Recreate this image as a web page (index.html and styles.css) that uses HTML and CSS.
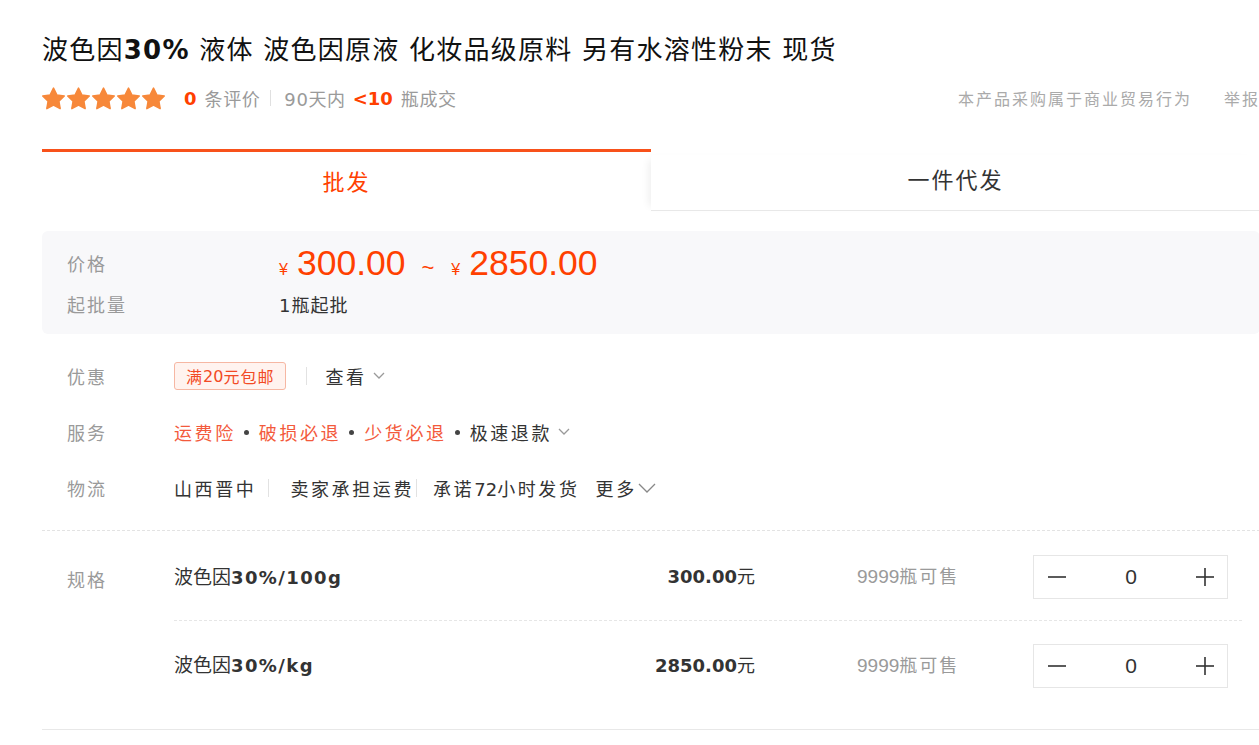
FILE: index.html
```html
<!DOCTYPE html>
<html lang="zh-CN">
<head>
<meta charset="utf-8">
<title>波色因30% 液体</title>
<link rel="stylesheet" href="styles.css">
</head>
<body>
<div class="page">
  <h1 class="title">波色因<b>30%</b> 液体 波色因原液 化妆品级原料 另有水溶性粉末 现货</h1>

  <div class="meta">
    <div class="rating">
      <div class="stars">
        <svg viewBox="0 0 24 24"><path d="M12 1.2L15.47 8.23L23.22 9.35L17.61 14.82L18.94 22.55L12 18.9L5.06 22.55L6.39 14.82L0.78 9.35L8.53 8.23Z"/></svg>
        <svg viewBox="0 0 24 24"><path d="M12 1.2L15.47 8.23L23.22 9.35L17.61 14.82L18.94 22.55L12 18.9L5.06 22.55L6.39 14.82L0.78 9.35L8.53 8.23Z"/></svg>
        <svg viewBox="0 0 24 24"><path d="M12 1.2L15.47 8.23L23.22 9.35L17.61 14.82L18.94 22.55L12 18.9L5.06 22.55L6.39 14.82L0.78 9.35L8.53 8.23Z"/></svg>
        <svg viewBox="0 0 24 24"><path d="M12 1.2L15.47 8.23L23.22 9.35L17.61 14.82L18.94 22.55L12 18.9L5.06 22.55L6.39 14.82L0.78 9.35L8.53 8.23Z"/></svg>
        <svg viewBox="0 0 24 24"><path d="M12 1.2L15.47 8.23L23.22 9.35L17.61 14.82L18.94 22.55L12 18.9L5.06 22.55L6.39 14.82L0.78 9.35L8.53 8.23Z"/></svg>
      </div>
      <span class="num">0</span><span class="cj">条评价</span>
      <span class="vsep"></span>
      <span class="cj">90天内</span><span class="num lt">&lt;10</span><span class="cj">瓶成交</span>
    </div>
    <div class="meta-right">
      <span>本产品采购属于商业贸易行为</span>
      <span>举报</span>
    </div>
  </div>

  <div class="tabs">
    <div class="tab active">批发</div>
    <div class="tab other">一件代发</div>
  </div>

  <div class="pricebox">
    <div class="prow p1">
      <span class="label">价格</span>
      <span class="price"><span class="yen">¥</span><span class="big">300.00</span><span class="tilde">~</span><span class="yen">¥</span><span class="big">2850.00</span></span>
    </div>
    <div class="prow p2">
      <span class="label">起批量</span>
      <span class="val">1瓶起批</span>
    </div>
  </div>

  <div class="info">
    <div class="irow">
      <span class="label">优惠</span>
      <span class="tag">满<span class="lat">20</span>元包邮</span>
      <span class="isep sep-a"></span>
      <span class="val">查看</span>
      <svg class="chev" viewBox="0 0 12 8"><polyline points="1,1 6,6 11,1"/></svg>
    </div>
    <div class="irow">
      <span class="label">服务</span>
      <span class="svc">运费险</span><span class="dot"></span>
      <span class="svc">破损必退</span><span class="dot"></span>
      <span class="svc">少货必退</span><span class="dot"></span>
      <span class="val">极速退款</span>
      <svg class="chev chev-b" viewBox="0 0 12 8"><polyline points="1,1 6,6 11,1"/></svg>
    </div>
    <div class="irow">
      <span class="label">物流</span>
      <span class="val">山西晋中</span>
      <span class="isep sep-b"></span>
      <span class="val">卖家承担运费</span>
      <span class="isep sep-c"></span>
      <span class="val">承诺<span class="lat">72</span>小时发货</span>
      <span class="val more">更多</span>
      <svg class="chev chev-big" viewBox="0 0 18 10"><polyline points="1,1 9,9 17,1"/></svg>
    </div>
  </div>

  <div class="specs">
    <span class="label spec-label">规格</span>
    <div class="slist">
      <div class="srow">
        <span class="sname">波色因<b>30%/100g</b></span>
        <span class="sprice"><b>300.00</b>元</span>
        <span class="stock"><span class="lat2">9999</span>瓶可售</span>
        <div class="stepper">
          <svg viewBox="0 0 18 18"><line x1="0" y1="9" x2="18" y2="9"/></svg>
          <span class="qty">0</span>
          <svg viewBox="0 0 18 18"><line x1="0" y1="9" x2="18" y2="9"/><line x1="9" y1="0" x2="9" y2="18"/></svg>
        </div>
      </div>
      <div class="srow">
        <span class="sname">波色因<b>30%/kg</b></span>
        <span class="sprice"><b>2850.00</b>元</span>
        <span class="stock"><span class="lat2">9999</span>瓶可售</span>
        <div class="stepper">
          <svg viewBox="0 0 18 18"><line x1="0" y1="9" x2="18" y2="9"/></svg>
          <span class="qty">0</span>
          <svg viewBox="0 0 18 18"><line x1="0" y1="9" x2="18" y2="9"/><line x1="9" y1="0" x2="9" y2="18"/></svg>
        </div>
      </div>
    </div>
  </div>
</div>
</body>
</html>
```

FILE: styles.css
```css
html, body {
  margin: 0;
  padding: 0;
  overflow: hidden;
  background: #fff;
}

body {
  font-family: "DejaVu Sans", "Noto Sans CJK SC", sans-serif;
  color: #333;
}

.page {
  width: 1218px;
  padding: 32px 0 0 42px;
}

/* title */
.title {
  margin: 0;
  font-size: 26px;
  line-height: 36px;
  font-weight: normal;
  color: #111;
  letter-spacing: 1.25px;
  white-space: nowrap;
}

.title b {
  font-weight: bold;
}

/* rating row */
.meta {
  display: flex;
  align-items: center;
  justify-content: space-between;
  height: 26px;
  margin-top: 17px;
}

.rating {
  display: flex;
  align-items: center;
  font-size: 18px;
  color: #9a9a9a;
  white-space: nowrap;
}

.rating .cj {
  letter-spacing: 0.6px;
}

.stars {
  display: flex;
  gap: 2px;
  margin-right: 19px;
}

.stars svg {
  width: 23px;
  height: 23px;
  display: block;
  overflow: visible;
}

.stars path {
  fill: #f7883a;
  stroke: #f7883a;
  stroke-width: 1.6;
  stroke-linejoin: round;
}

.num {
  color: #ff4000;
  font-weight: bold;
  margin-right: 8px;
}

.num.lt {
  margin-left: 7px;
}

.vsep {
  width: 1px;
  height: 16px;
  background: #e0e0e0;
  margin: 0 13px 0 10px;
}

.meta-right {
  display: flex;
  gap: 32px;
  font-size: 16px;
  letter-spacing: 2px;
  color: #aaa;
  white-space: nowrap;
}

/* tabs */
.tabs {
  display: flex;
  height: 62px;
  margin-top: 38px;
}

.tab {
  flex: 1;
  display: flex;
  align-items: center;
  justify-content: center;
  font-size: 22px;
  letter-spacing: 2px;
}

.tab.active {
  border-top: 3px solid #f8511a;
  padding-bottom: 4px;
  color: #ff4000;
}

.tab.other {
  margin-top: 6px;
  padding-bottom: 9px;
  border-bottom: 1px solid #e8e8e8;
  border-radius: 4px 0 0 0;
  box-shadow: -7px 0 8px -5px rgba(0, 0, 0, 0.07);
  color: #333;
}

/* price box */
.pricebox {
  margin-top: 20px;
  background: #f8f8fa;
  border-radius: 6px;
  padding: 10px 25px 11px;
}

.prow {
  display: flex;
  align-items: center;
}

.prow.p1 {
  height: 44px;
}

.prow.p2 {
  height: 38px;
}

.label {
  flex: none;
  width: 212px;
  color: #9a9a9a;
  font-size: 18px;
  letter-spacing: 2px;
}

.price {
  display: flex;
  align-items: baseline;
  color: #ff4000;
  font-family: "Liberation Sans", sans-serif;
}

.yen {
  font-size: 16px;
  margin-right: 9px;
}

.big {
  font-size: 35.5px;
}

.tilde {
  font-size: 22px;
  margin: 0 17px 0 16px;
}

.val {
  font-size: 18px;
  letter-spacing: 2.6px;
  color: #333;
  white-space: nowrap;
}

.prow .val {
  letter-spacing: 1px;
}

/* info rows */
.info {
  margin-top: 14px;
  padding: 0 0 14px 25px;
  border-bottom: 1px dashed #e3e3e3;
}

.irow {
  display: flex;
  align-items: center;
  height: 56px;
  font-size: 18px;
}

.irow .label {
  width: 107px;
}

.lat {
  letter-spacing: 0;
}

.tag {
  box-sizing: border-box;
  height: 28px;
  display: flex;
  align-items: center;
  padding: 0 11px;
  border: 1px solid #f6b7a3;
  background: #fff3ef;
  border-radius: 3px;
  color: #f24a24;
  font-size: 16px;
  letter-spacing: 1px;
  white-space: nowrap;
}

.isep {
  width: 1px;
  height: 18px;
  background: #e2e2e2;
}

.sep-a {
  margin: 0 18px 0 20px;
}

.sep-b {
  margin: 0 21px 0 12px;
}

.sep-c {
  margin: 0 16px 0 2px;
}

.svc {
  color: #f35a3c;
  letter-spacing: 2.6px;
  white-space: nowrap;
}

.dot {
  width: 5px;
  height: 5px;
  border-radius: 50%;
  background: #444;
  margin: 0 10px 0 8px;
}

.chev {
  width: 12px;
  height: 8px;
  margin-left: 6px;
  fill: none;
  stroke: #9a9a9a;
  stroke-width: 1.3;
}

.chev-b {
  margin-left: 6px;
}

.more {
  margin-left: 16px;
}

.chev-big {
  width: 18px;
  height: 10px;
  margin-left: 1px;
  stroke: #888;
}

/* specs */
.specs {
  display: flex;
  padding: 2px 0 20px 25px;
  border-bottom: 1px solid #e8e8e8;
}

.specs .spec-label {
  width: 107px;
  padding-top: 35px;
  line-height: 26px;
}

.slist {
  width: 1068px;
}

.srow {
  box-sizing: border-box;
  display: flex;
  align-items: center;
  height: 88px;
  padding-bottom: 3px;
  border-bottom: 1px dashed #e6e6e6;
}

.srow:last-child {
  border-bottom: none;
}

.sname {
  width: 400px;
  font-size: 19px;
  color: #333;
  white-space: nowrap;
}

.sname b {
  font-size: 18px;
  letter-spacing: 1.4px;
}

.sprice {
  width: 181px;
  text-align: right;
  font-size: 18px;
  color: #333;
  white-space: nowrap;
}

.sprice b {
  letter-spacing: 0;
}

.stock {
  width: 176px;
  margin-left: 102px;
  font-size: 18px;
  letter-spacing: 2px;
  color: #9a9a9a;
  white-space: nowrap;
}

.lat2 {
  font-family: "Liberation Sans", sans-serif;
  letter-spacing: 0;
  font-size: 19px;
}

.stepper {
  box-sizing: border-box;
  width: 195px;
  height: 44px;
  margin-top: 4px;
  border: 1px solid #e6e6e6;
  display: flex;
  align-items: center;
  justify-content: space-between;
  padding: 0 13px 0 14px;
}

.stepper svg {
  width: 18px;
  height: 18px;
  stroke: #333;
  stroke-width: 1.6;
}

.qty {
  font-family: "Liberation Sans", sans-serif;
  font-size: 21px;
  color: #333;
}
```
